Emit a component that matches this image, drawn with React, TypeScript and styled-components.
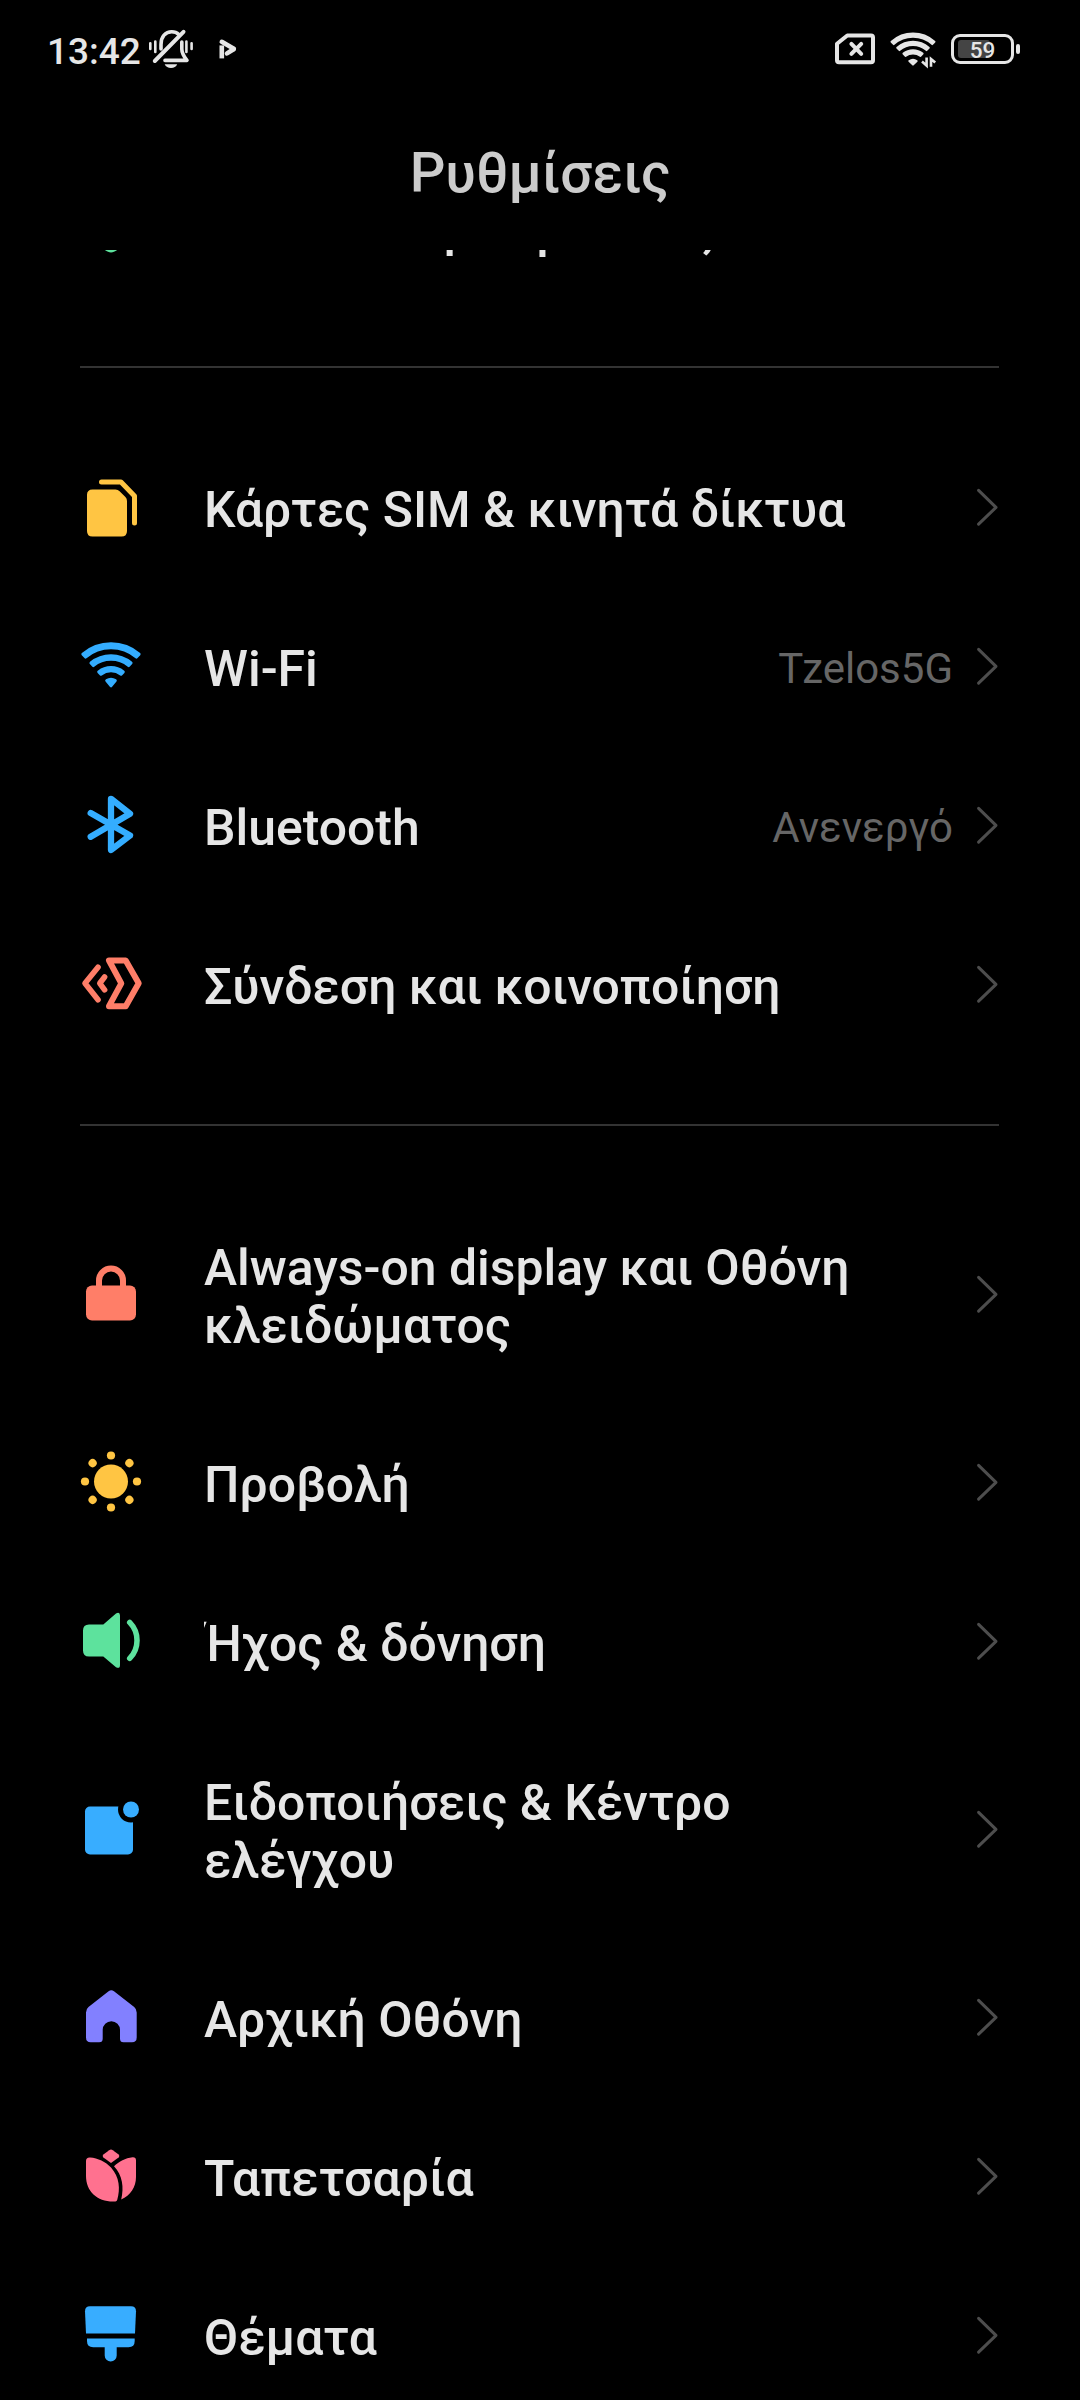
import React from 'react';
import styled, { createGlobalStyle } from 'styled-components';

const GlobalStyle = createGlobalStyle`
  * { box-sizing: border-box; }
  html, body { margin: 0; background: #000; }
  body { font-family: Roboto, "Noto Sans", sans-serif; }
`;

const Screen = styled.main`
  width: 1080px;
  height: 2400px;
  display: flex;
  flex-direction: column;
  background: #000;
  overflow: hidden;
`;

const StatusBar = styled.div`
  height: 100px;
  flex: none;
  display: flex;
  align-items: center;
  justify-content: space-between;
  padding: 0 60px 2px 47px;
  color: #e6e6e6;
`;

const StatusGroup = styled.div<{ $gap: number }>`
  display: flex;
  align-items: center;
  gap: ${(p) => p.$gap}px;
`;

const Clock = styled.span`
  width: 95px;
  padding-top: 6px;
  font-size: 37px;
  font-weight: 500;
  line-height: 44px;
  white-space: nowrap;
`;

const StatusIcon = styled.svg`
  display: block;
  flex: none;
  overflow: visible;
`;

const Battery = styled.div`
  display: flex;
  align-items: center;
  gap: 2px;
`;

const BatteryShell = styled.div`
  position: relative;
  width: 63px;
  height: 30px;
  border: 3px solid #e6e6e6;
  border-radius: 9px;
  display: flex;
  align-items: center;
  justify-content: center;
`;

const BatteryLevel = styled.div`
  position: absolute;
  left: 4px;
  top: 3px;
  bottom: 3px;
  width: 32px;
  border-radius: 3px;
  background: #444;
`;

const BatteryText = styled.span`
  position: relative;
  padding-top: 1px;
  font-size: 22.5px;
  font-weight: 500;
  line-height: 24px;
`;

const BatteryCap = styled.div`
  width: 4px;
  height: 10px;
  border-radius: 2px;
  background: #e6e6e6;
`;

const Header = styled.header`
  height: 150px;
  flex: none;
  display: flex;
  justify-content: center;
  padding-top: 40px;
`;

const Title = styled.h1`
  margin: 0;
  font-size: 56px;
  line-height: 66px;
  font-weight: 500;
  color: #ccc;
`;

const Viewport = styled.div`
  flex: 1;
  min-height: 0;
  overflow: hidden;
`;

const List = styled.div`
  margin-top: -103px;
`;

const Divider = styled.hr`
  height: 2px;
  margin: 60px 81px 60px 80px;
  border: 0;
  background: #333;
`;

const Row = styled.div<{ $tall?: boolean }>`
  height: ${(p) => (p.$tall ? 217 : 159)}px;
  display: flex;
  align-items: center;
  padding: 0 80px 0 78px;
`;

const RowIcon = styled.svg`
  width: 66px;
  height: 66px;
  flex: none;
  margin: 0 60px 1px 0;
  overflow: visible;
`;

const Label = styled.span`
  flex: 1;
  padding: 6px 0 1px;
  overflow: hidden;
  color: #e6e6e6;
  font-size: 49.9px;
  font-weight: 500;
  line-height: 58.5px;
  white-space: pre-line;
`;

const Value = styled.span`
  padding-top: 4px;
  color: #666;
  font-size: 42px;
  line-height: 50px;
`;

const Chevron = styled.svg`
  width: 24px;
  height: 40px;
  flex: none;
  margin: 0 0 1px 23px;
`;

/* A rounded slice of a ring that opens upwards from (cx, cy). */
function band(cx: number, cy: number, outer: number, inner: number, deg: number, soft: number) {
  const ro = outer - soft;
  const ri = inner + soft;
  const a = (deg * Math.PI) / 180;
  const ao = a - soft / ro;
  const ai = a - soft / ri;
  const pt = (r: number, t: number) => `${(cx + r * Math.sin(t)).toFixed(2)} ${(cy - r * Math.cos(t)).toFixed(2)}`;
  return `M${pt(ro, -ao)}A${ro} ${ro} 0 0 1 ${pt(ro, ao)}L${pt(ri, ai)}A${ri} ${ri} 0 0 0 ${pt(ri, -ai)}Z`;
}

const round = { fill: 'none', strokeLinecap: 'round', strokeLinejoin: 'round' } as const;

const blue = '#34adff';
const yellow = '#ffc543';
const coral = '#ff7e68';
const green = '#5de29d';

const icons = {
  shield: <path fill={green} d="M33 6L57 15V32C57 45 45 54 36 58.8Q33 60.2 30 58.8C21 54 9 45 9 32V15Z" />,
  sim: (
    <>
      <path fill={yellow} d="M14.5 15.5H37.5Q40 15.5 41.6 17.2L47.4 23Q49 24.7 49 27V57Q49 62.5 43.5 62.5H14.5Q9 62.5 9 57V21Q9 15.5 14.5 15.5Z" />
      <path {...round} stroke={yellow} strokeWidth="5" d="M23.5 8H43L56.5 22V49" />
    </>
  ),
  wifi: (
    <g fill={blue} stroke={blue} strokeWidth="3" strokeLinejoin="round">
      <path d={band(33, 54.3, 45, 38, 42.3, 1.5)} />
      <path d={band(33, 54.3, 33, 26.5, 42.3, 1.5)} />
      <path d={band(33, 54.3, 21.2, 15, 43, 1.5)} />
      <path d="M28.7 47.6Q33 44.8 37.3 47.6L33 52.8Z" />
    </g>
  ),
  bluetooth: <path {...round} stroke={blue} strokeWidth="6.3" d="M12.7 21L52 43.6L33 58V6.8L52 21.8L12.7 44.8" />,
  share: (
    <g {...round} stroke={coral}>
      <path strokeWidth="5.6" d="M20 16.2L7 32.2L20 48.8" />
      <path strokeWidth="5.6" d="M26.6 26L21.8 32.3L26.6 38.8" />
      <path strokeWidth="6" d="M31 9.5H47.7L60.7 32.3L47.7 55.2H31L43.3 32.3Z" />
    </g>
  ),
  lock: (
    <>
      <rect x="8" y="24.5" width="50" height="35" rx="6" fill={coral} />
      <path d="M21 27V19.5a12 12 0 0 1 24 0V27" fill="none" stroke={coral} strokeWidth="6" />
    </>
  ),
  sun: (
    <g fill={yellow}>
      <circle cx="33" cy="32.5" r="17" />
      {[0, 45, 90, 135, 180, 225, 270, 315].map((a) => (
        <circle key={a} cx="33" cy="6.5" r="4.1" transform={`rotate(${a} 33 32.5)`} />
      ))}
    </g>
  ),
  sound: (
    <>
      <path fill={green} d="M11 16.5H25.3L38 5.4Q42 3.4 42 7.5V57Q42 61.2 38 59.2L25.3 48.5H11Q5 48.5 5 42.5V22.5Q5 16.5 11 16.5Z" />
      <path {...round} stroke={green} strokeWidth="5.5" d="M51.7 14.4A25.8 25.8 0 0 1 51.7 50.4" />
    </>
  ),
  notice: (
    <>
      <rect x="7" y="10.5" width="48" height="48" rx="5" fill="#38adff" />
      <circle cx="53" cy="13.5" r="13" fill="#000" />
      <circle cx="53" cy="13.5" r="8" fill="#38adff" />
    </>
  ),
  home: (
    <path
      fill="#8280ff"
      d="M30.6 7.2Q33.3 5.2 36 7.2L56.2 23Q58.7 25 58.7 28.5V53.5Q58.7 58.2 54 58.2H45.5Q42 58.2 42 54.7V45.8A8.65 8.65 0 0 0 24.7 45.8V54.7Q24.7 58.2 21.2 58.2H12.7Q8 58.2 8 53.5V28.5Q8 25 10.5 23Z"
    />
  ),
  tulip: (
    <g fill="#ff718f">
      <path d="M31.2 7.2Q33 6 34.8 7.2L40.6 11.6Q42.2 13 40.6 14.4L33 20L25.4 14.4Q23.8 13 25.4 11.6Z" />
      <path d="M8 18Q8 14.2 12 14.4C20 15 27.5 18.5 33 24.5C41.5 34 42.5 46 39.2 57Q38.8 58.4 37.4 58.5C20 59.5 8 49 8 33Z" />
      <path d="M36 23.3C41 18.5 47.5 15.2 54.5 14.3Q58 14 58 17.6V34C58 44 52.5 52.5 43.2 56.6C46.2 44 44.5 32.5 36 23.3Z" />
    </g>
  ),
  brush: (
    <g fill="#38adff">
      <path d="M12 4.2H53Q58 4.2 58 9.2L57 31.5H8L7 9.2Q7 4.2 12 4.2Z" />
      <path d="M9 36.5H56.7V39Q56.7 45.2 50.5 45.2H38.7V53.5A6 6 0 0 1 26.7 53.5V45.2H15.2Q9 45.2 9 39Z" />
    </g>
  ),
};

type Item = { icon: keyof typeof icons; label: string; value?: string };

const groups: Item[][] = [
  [{ icon: 'shield', label: 'Κατάσταση ασφαλείας' }],
  [
    { icon: 'sim', label: 'Κάρτες SIM & κινητά δίκτυα' },
    { icon: 'wifi', label: 'Wi-Fi', value: 'Tzelos5G' },
    { icon: 'bluetooth', label: 'Bluetooth', value: 'Ανενεργό' },
    { icon: 'share', label: 'Σύνδεση και κοινοποίηση' },
  ],
  [
    { icon: 'lock', label: 'Always-on display και Οθόνη\nκλειδώματος' },
    { icon: 'sun', label: 'Προβολή' },
    { icon: 'sound', label: 'Ήχος & δόνηση' },
    { icon: 'notice', label: 'Ειδοποιήσεις & Κέντρο\nελέγχου' },
    { icon: 'home', label: 'Αρχική Οθόνη' },
    { icon: 'tulip', label: 'Ταπετσαρία' },
    { icon: 'brush', label: 'Θέματα' },
  ],
];

function SettingRow({ icon, label, value }: Item) {
  return (
    <Row $tall={label.includes('\n')}>
      <RowIcon viewBox="0 0 66 66">{icons[icon]}</RowIcon>
      <Label>{label}</Label>
      {value && <Value>{value}</Value>}
      <Chevron viewBox="0 0 24 40">
        <path {...round} stroke="#4d4d4d" strokeWidth="3" d="M2.6 3.4L20 20.4L2.6 37.2" />
      </Chevron>
    </Row>
  );
}

function MutedBell() {
  return (
    <StatusIcon width="50" height="44" viewBox="0 0 50 44">
      <g {...round} stroke="#e6e6e6" strokeWidth="3.6">
        <path d="M15 22V17.5C15 9.5 19.5 4.8 25.7 4.8C28.5 4.8 31 5.8 32.8 7.6" />
        <path d="M35.8 15V22C35.8 27 38 29.5 41 33.4H19" />
        <path strokeWidth="4" d="M37.5 4.8L8.8 34" />
      </g>
      <path fill="#e6e6e6" d="M18.7 37.2H31.2Q29.5 41 25 41Q20.5 41 18.7 37.2Z" />
      <path {...round} stroke="#e6e6e6" strokeWidth="2.6" d="M4.3 16.2V22M9.3 14.5V25M40.4 14.5V25M45.6 16.2V22" />
    </StatusIcon>
  );
}

function PlayMark() {
  return (
    <StatusIcon width="20" height="22" viewBox="0 0 20 22">
      <g {...round} stroke="#e6e6e6" strokeWidth="4.6">
        <path d="M3.8 3.8L15.8 10.8" />
        <path strokeLinecap="butt" d="M3.8 7.4V20.4" />
        <path d="M15.6 11.2L9 15.4" />
      </g>
    </StatusIcon>
  );
}

function NoSim() {
  return (
    <StatusIcon width="44" height="36" viewBox="0 0 44 36">
      <g {...round} stroke="#e6e6e6" strokeWidth="4">
        <path d="M4 12.7L14.3 4.5H38Q40 4.5 40 6.5V29.3Q40 31.3 38 31.3H6Q4 31.3 4 29.3Z" />
        <path d="M18.4 12.9L28.2 22.9M28.2 12.9L18.4 22.9" />
      </g>
    </StatusIcon>
  );
}

function WifiStatus() {
  return (
    <StatusIcon width="50" height="40" viewBox="0 0 50 40">
      <g fill="#e6e6e6" stroke="#e6e6e6" strokeWidth="2" strokeLinejoin="round">
        <path d={band(24, 36.8, 33.3, 28, 43.5, 1)} />
        <path d={band(24, 36.8, 25, 19.7, 43.5, 1)} />
        <path d={band(24, 36.8, 16.5, 11.4, 42, 1)} />
        <path d="M20.3 32Q24 29.4 27.7 32L24 35.6Z" />
      </g>
      <path fill="none" stroke="#e6e6e6" strokeWidth="2.6" d="M37.6 28.6V36.6L33 32.6M42 37.8V30L46.2 33.6" />
    </StatusIcon>
  );
}

export default function App() {
  return (
    <Screen>
      <GlobalStyle />
      <StatusBar>
        <StatusGroup $gap={22}>
          <StatusGroup $gap={4}>
            <Clock>13:42</Clock>
            <MutedBell />
          </StatusGroup>
          <PlayMark />
        </StatusGroup>
        <StatusGroup $gap={12}>
          <NoSim />
          <WifiStatus />
          <Battery>
            <BatteryShell>
              <BatteryLevel />
              <BatteryText>59</BatteryText>
            </BatteryShell>
            <BatteryCap />
          </Battery>
        </StatusGroup>
      </StatusBar>
      <Header>
        <Title>Ρυθμίσεις</Title>
      </Header>
      <Viewport>
        <List>
          {groups.map((items, i) => (
            <React.Fragment key={i}>
              {i > 0 && <Divider />}
              {items.map((item) => (
                <SettingRow key={item.label} {...item} />
              ))}
            </React.Fragment>
          ))}
        </List>
      </Viewport>
    </Screen>
  );
}
